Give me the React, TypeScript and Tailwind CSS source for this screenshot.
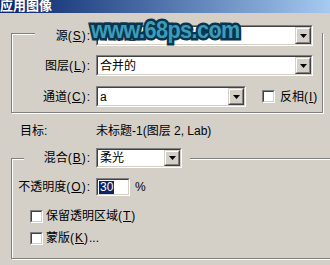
import type { ReactNode } from "react";
import { twMerge as cn } from "tailwind-merge";

// Sunken Win-classic text field (combo / edit / checkbox frame)
function Field({ className, children }: { className?: string; children?: ReactNode }) {
  return (
    <div
      className={cn(
        "border border-t-[#808080] border-l-[#808080] border-r-white border-b-white",
        className
      )}
    >
      <div className="flex h-full items-center border border-t-[#404040] border-l-[#404040] border-r-[#d4d0c8] border-b-[#d4d0c8] bg-white">
        {children}
      </div>
    </div>
  );
}

function ArrowButton() {
  return (
    <div className="h-full w-[16px] border border-t-[#d4d0c8] border-l-[#d4d0c8] border-r-[#404040] border-b-[#404040]">
      <div className="flex h-full items-center justify-center border border-t-white border-l-white border-r-[#808080] border-b-[#808080] bg-[#d4d0c8]">
        <svg width="7" height="4" viewBox="0 0 7 4">
          <path d="M0 0h7L3.5 4z" fill="#000" />
        </svg>
      </div>
    </div>
  );
}

function Combo({ value, className }: { value: string; className?: string }) {
  return (
    <Field className={className}>
      <span className="flex-1 truncate pl-[2px]">{value}</span>
      <ArrowButton />
    </Field>
  );
}

function Checkbox() {
  return <Field className="h-[13px] w-[13px] shrink-0" />;
}

function Key({ k, colon = true }: { k: string; colon?: boolean }) {
  return (
    <span className="tracking-[1px]">
      (<span className="underline underline-offset-[1px]">{k}</span>){colon ? ":" : ""}
    </span>
  );
}

export default function App() {
  return (
    <div className="relative h-[265px] w-[330px] overflow-hidden bg-[#d4d0c8] font-['Liberation_Sans','Noto_Sans_CJK_SC',sans-serif] text-[12px] leading-[14px] text-black">
      {/* Title bar */}
      <div className="h-[13px] overflow-hidden bg-linear-to-r from-[#0a246a] to-[#a6caf0]">
        <div className="-mt-[2px] font-['Noto_Sans_CJK_SC',sans-serif] text-[13px] font-bold leading-[13px] text-white">
          应用图像
        </div>
      </div>

      {/* Source group */}
      <div className="ml-[11px] mt-[20px] w-[312px] border border-[#808080] pb-[5px] shadow-[inset_1px_1px_0_#fff,1px_1px_0_#fff]">
        <div className="-mt-[9px] flex h-[21px]">
          <div className="w-[23px]" />
          <div className="flex flex-1 items-center bg-[#d4d0c8]">
            <div className="w-[61px] pr-[5px] text-right">
              源<Key k="S" />
            </div>
            <Combo value="未标题-1" className="h-full w-[217px]" />
          </div>
        </div>
        <div className="mt-[9px] flex h-[21px] items-center">
          <div className="w-[84px] pr-[5px] text-right">
            图层<Key k="L" />
          </div>
          <Combo value="合并的" className="h-full w-[217px]" />
        </div>
        <div className="mt-[10px] flex h-[21px] items-center">
          <div className="w-[84px] pr-[5px] text-right">
            通道<Key k="C" />
          </div>
          <Combo value="a" className="h-full w-[150px]" />
          <div className="ml-[16px]">
            <Checkbox />
          </div>
          <span className="ml-[5px]">
            反相<Key k="I" colon={false} />
          </span>
        </div>
      </div>

      {/* Target */}
      <div className="mt-[11px] flex h-[14px] items-center">
        <div className="w-[96px] pl-[20px]">目标:</div>
        <div>未标题-1(图层 2, Lab)</div>
      </div>

      {/* Blending group */}
      <div className="ml-[11px] mt-[20px] w-[340px] border border-[#808080] pb-[13px] shadow-[inset_1px_1px_0_#fff,1px_1px_0_#fff]">
        <div className="-mt-[11px] flex h-[20px]">
          <div className="w-[12px]" />
          <div className="flex items-center bg-[#d4d0c8] pr-[8px]">
            <div className="w-[72px] pr-[5px] text-right">
              混合<Key k="B" />
            </div>
            <Combo value="柔光" className="h-full w-[86px]" />
          </div>
        </div>
        <div className="mt-[10px] flex h-[18px] items-center">
          <div className="w-[84px] pr-[5px] text-right">
            不透明度<Key k="O" />
          </div>
          <Field className="h-full w-[34px]">
            <span className="ml-[1px] bg-[#0a246a] px-[1px] leading-[13px] text-white">30</span>
          </Field>
          <span className="ml-[5px]">%</span>
        </div>
        <div className="mt-[13px] flex h-[14px] items-center pl-[18px]">
          <Checkbox />
          <span className="ml-[3px]">
            保留透明区域<Key k="T" colon={false} />
          </span>
        </div>
        <div className="mt-[8px] flex h-[14px] items-center pl-[18px]">
          <Checkbox />
          <span className="ml-[3px]">
            蒙版<Key k="K" colon={false} />...
          </span>
        </div>
      </div>

      {/* Site watermark over the dialog */}
      <div className="absolute left-[91px] top-[18px] origin-left scale-x-[0.9] whitespace-nowrap font-['Liberation_Sans',sans-serif] text-[24px] font-bold leading-[24px] tracking-[-0.6px] text-[#3d9cba] [-webkit-text-stroke:5px_#073650] [paint-order:stroke_fill]">
        www.68ps.com
      </div>
    </div>
  );
}
